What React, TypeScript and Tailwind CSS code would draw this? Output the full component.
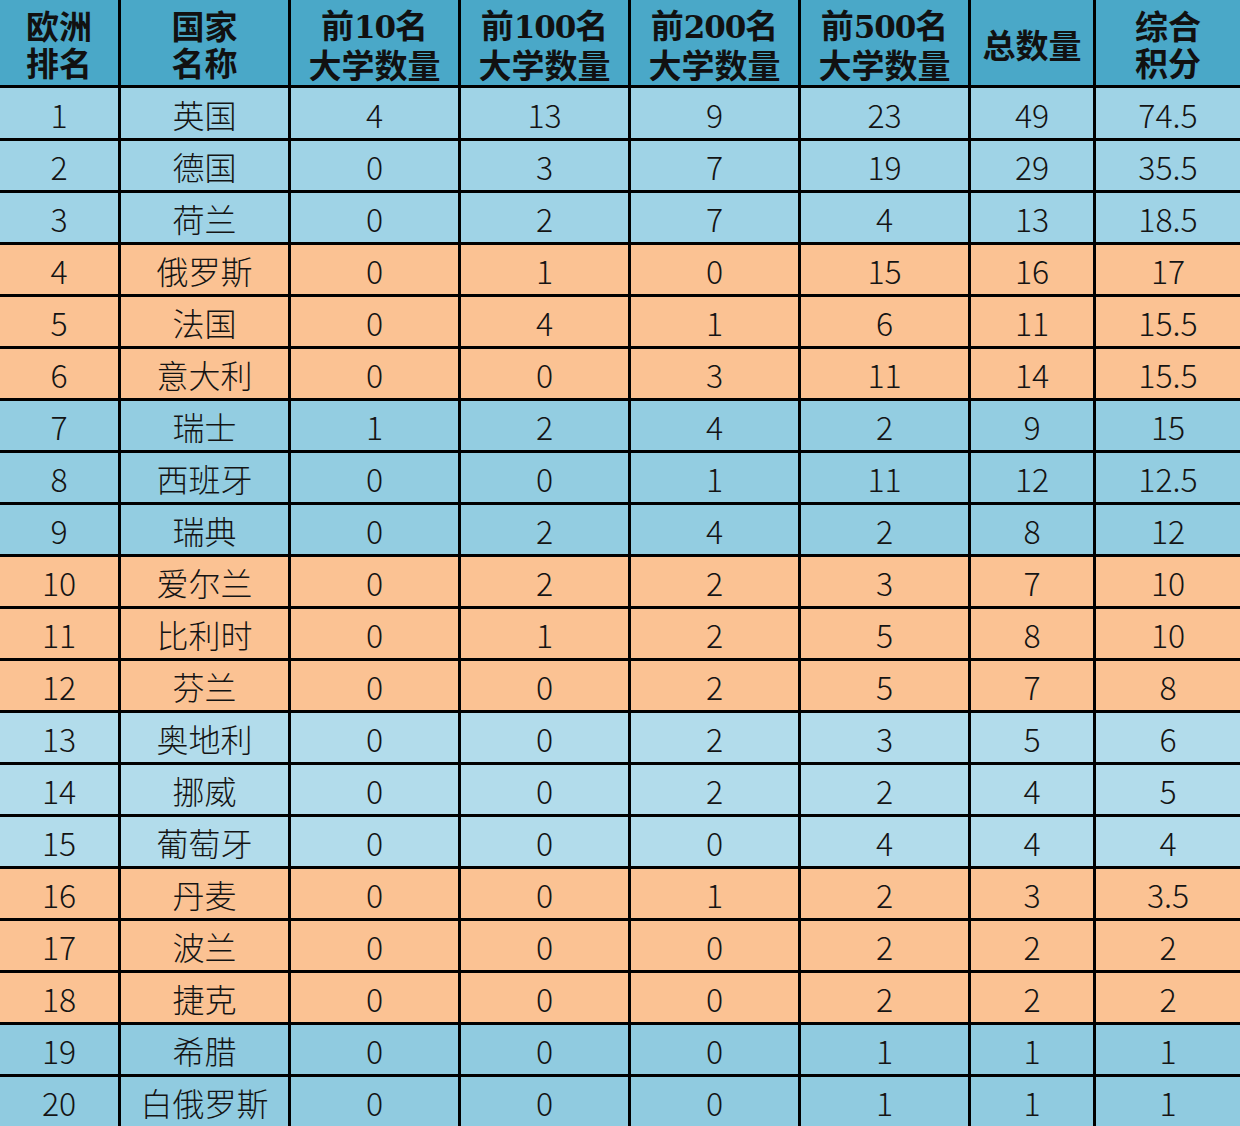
const headers: string[][] = [
  ["欧洲", "排名"],
  ["国家", "名称"],
  ["前|10|名", "大学数量"],
  ["前|100|名", "大学数量"],
  ["前|200|名", "大学数量"],
  ["前|500|名", "大学数量"],
  ["总数量"],
  ["综合", "积分"],
];

const rows: (string | number)[][] = [
  [1, "英国", 4, 13, 9, 23, 49, "74.5"],
  [2, "德国", 0, 3, 7, 19, 29, "35.5"],
  [3, "荷兰", 0, 2, 7, 4, 13, "18.5"],
  [4, "俄罗斯", 0, 1, 0, 15, 16, "17"],
  [5, "法国", 0, 4, 1, 6, 11, "15.5"],
  [6, "意大利", 0, 0, 3, 11, 14, "15.5"],
  [7, "瑞士", 1, 2, 4, 2, 9, "15"],
  [8, "西班牙", 0, 0, 1, 11, 12, "12.5"],
  [9, "瑞典", 0, 2, 4, 2, 8, "12"],
  [10, "爱尔兰", 0, 2, 2, 3, 7, "10"],
  [11, "比利时", 0, 1, 2, 5, 8, "10"],
  [12, "芬兰", 0, 0, 2, 5, 7, "8"],
  [13, "奥地利", 0, 0, 2, 3, 5, "6"],
  [14, "挪威", 0, 0, 2, 2, 4, "5"],
  [15, "葡萄牙", 0, 0, 0, 4, 4, "4"],
  [16, "丹麦", 0, 0, 1, 2, 3, "3.5"],
  [17, "波兰", 0, 0, 0, 2, 2, "2"],
  [18, "捷克", 0, 0, 0, 2, 2, "2"],
  [19, "希腊", 0, 0, 0, 1, 1, "1"],
  [20, "白俄罗斯", 0, 0, 0, 1, 1, "1"],
];

// one colour per group of three rows
const groupBg = [
  "bg-[#9fd3e6]",
  "bg-[#fbc293]",
  "bg-[#93cde1]",
  "bg-[#fbc293]",
  "bg-[#b2dceb]",
  "bg-[#fbc293]",
  "bg-[#90cbe0]",
];

const cols = "grid grid-cols-[121px_170px_170px_170px_170px_170px_125px_144px]";

// "前|100|名" -> digits set in a bold serif like the original sheet
function HeadLine({ text }: { text: string }) {
  const parts = text.split("|");
  if (parts.length === 1) return <>{text}</>;
  return (
    <>
      {parts[0]}
      <span className="font-['DejaVu_Serif'] text-[31px] tracking-[-1px]">{parts[1]}</span>
      {parts[2]}
    </>
  );
}

export default function App() {
  return (
    <div
      className="w-[1240px] text-[#141414]"
      style={{ fontFamily: '"Noto Sans CJK SC", "Noto Sans", sans-serif' }}
    >
      <div className={`${cols} h-[88px] bg-[#4aa8c8]`}>
        {headers.map((lines, i) => (
          <div
            key={i}
            className={`flex items-center justify-center border-b-[3px] border-black pt-[3px] text-center text-[33px] font-bold leading-[37px] text-[#111] ${
              i < 7 ? "border-r-[3px]" : ""
            }`}
          >
            <span>
              <HeadLine text={lines[0]} />
              {lines[1] && <br />}
              {lines[1]}
            </span>
          </div>
        ))}
      </div>

      {rows.map((r, ri) => (
        <div key={ri} className={`${cols} h-[52px] ${groupBg[Math.floor(ri / 3)]}`}>
          {r.map((v, ci) => (
            <div
              key={ci}
              className={`flex items-center justify-center border-b-[3px] border-black pt-[2px] text-[32px] font-light ${
                ci < 7 ? "border-r-[3px]" : ""
              }`}
            >
              {v}
            </div>
          ))}
        </div>
      ))}
    </div>
  );
}
